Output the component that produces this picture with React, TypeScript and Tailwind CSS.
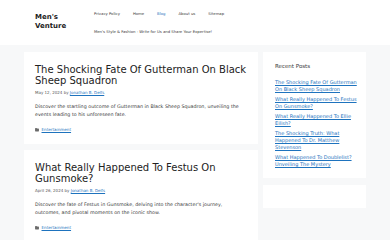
import React from "react";

const font = { fontFamily: '"DejaVu Sans", "Liberation Sans", sans-serif' };

function Folder() {
  return (
    <svg width="4" height="3.4" viewBox="0 0 8 7" className="mr-[2.5px] shrink-0">
      <path d="M0 1 Q0 0 1 0 H3 L4 1 H7 Q8 1 8 2 V6 Q8 7 7 7 H1 Q0 7 0 6 Z" fill="#6b6b6b" />
    </svg>
  );
}

function Article({
  title,
  date,
  excerpt,
}: {
  title: [string, string];
  date: string;
  excerpt: [string, string];
}) {
  return (
    <article className="bg-white px-[11px] pt-[12px] pb-[10.5px]">
      <h2 className="text-[10px] leading-[11px] text-[#222222] whitespace-nowrap font-normal">
        {title[0]}
        <br />
        {title[1]}
      </h2>
      <div className="mt-[4px] text-[4px] leading-[6px] text-[#595959] whitespace-nowrap">
        {date} by{" "}
        <span className="text-[#1e73be] underline">Jonathan B. Delfs</span>
      </div>
      <p className="mt-[6.6px] text-[4.8px] leading-[8.7px] text-[#3a3a3a] whitespace-nowrap">
        {excerpt[0]}
        <br />
        {excerpt[1]}
      </p>
      <div className="mt-[7px] flex items-center text-[4.1px] leading-[6px]">
        <Folder />
        <span className="text-[#1e73be] underline">Entertainment</span>
      </div>
    </article>
  );
}

const recent: string[][] = [
  ["The Shocking Fate Of Gutterman", "On Black Sheep Squadron"],
  ["What Really Happened To Festus", "On Gunsmoke?"],
  ["What Really Happened To Ellie", "Eilish?"],
  ["The Shocking Truth: What", "Happened To Dr. Matthew", "Stevenson"],
  ["What Happened To Doublelist?", "Unveiling The Mystery"],
];

export default function App() {
  return (
    <div style={font} className="w-[390px] h-[240px] overflow-hidden bg-[#f7f8f9]">
      <header className="bg-white h-[45px]">
        <div className="mx-[24px] px-[11px] flex items-start">
          <div className="pt-[13px] w-[52px] text-[7px] leading-[9px] font-bold text-[#222222]">
            Men's
            <br />
            Venture
          </div>
          <nav className="ml-[7px] pt-[11px] text-[3.8px] leading-[6px] text-[#3a3a3a]">
            <div className="flex gap-[13px] whitespace-nowrap">
              <span>Privacy Policy</span>
              <span>Home</span>
              <span className="text-[#1e73be]">Blog</span>
              <span>About us</span>
              <span>Sitemap</span>
            </div>
            <div className="mt-[12px] whitespace-nowrap">
              Men's Style &amp; Fashion - Write for Us and Share Your Expertise!
            </div>
          </nav>
        </div>
      </header>

      <main className="mx-[24px] pt-[7px] flex gap-[5px] items-start">
        <div className="w-[234px] flex flex-col gap-[6.5px]">
          <Article
            title={["The Shocking Fate Of Gutterman On Black", "Sheep Squadron"]}
            date="May 12, 2024"
            excerpt={[
              "Discover the startling outcome of Gutterman in Black Sheep Squadron, unveiling the",
              "events leading to his unforeseen fate.",
            ]}
          />
          <Article
            title={["What Really Happened To Festus On", "Gunsmoke?"]}
            date="April 26, 2024"
            excerpt={[
              "Discover the fate of Festus in Gunsmoke, delving into the character's journey,",
              "outcomes, and pivotal moments on the iconic show.",
            ]}
          />
        </div>
        <aside className="w-[103px] flex flex-col gap-[7px]">
          <div className="bg-white px-[12px] pt-[11.2px] pb-[9.5px]">
            <h2 className="text-[5.5px] leading-[7px] text-[#3a3a3a] font-normal">Recent Posts</h2>
            <ul className="mt-[9.3px] flex flex-col gap-[3px]">
              {recent.map((lines, i) => (
                <li key={i} className="text-[5px] leading-[7px] text-[#1e73be] underline whitespace-nowrap">
                  {lines.map((l, j) => (
                    <React.Fragment key={j}>
                      {j > 0 && <br />}
                      {l}
                    </React.Fragment>
                  ))}
                </li>
              ))}
            </ul>
          </div>
          <div className="bg-white h-[23px]" />
        </aside>
      </main>
    </div>
  );
}
